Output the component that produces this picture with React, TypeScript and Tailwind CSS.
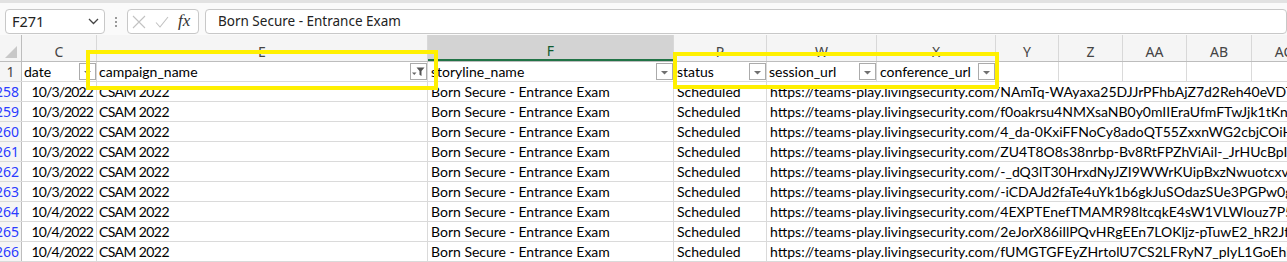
import React from "react";

type Col = { k: string; w: string; sel?: boolean };

const cols: Col[] = [
  { k: "C", w: "w-[75px]" },
  { k: "E", w: "w-[331px]" },
  { k: "F", w: "w-[246px]", sel: true },
  { k: "P", w: "w-[93px]" },
  { k: "W", w: "w-[110px]" },
  { k: "X", w: "w-[119px]" },
  { k: "Y", w: "w-[63px]" },
  { k: "Z", w: "w-[64px]" },
  { k: "AA", w: "w-[64px]" },
  { k: "AB", w: "w-[65px]" },
  { k: "AC", w: "w-[64px]" },
];

const rows = [
  { n: 258, d: "10/3/2022", u: "NAmTq-WAyaxa25DJJrPFhbAjZ7d2Reh40eVDTxq" },
  { n: 259, d: "10/3/2022", u: "f0oakrsu4NMXsaNB0y0mIIEraUfmFTwJjk1tKnQw" },
  { n: 260, d: "10/3/2022", u: "4_da-0KxiFFNoCy8adoQT55ZxxnWG2cbjCOiHtRe" },
  { n: 261, d: "10/3/2022", u: "ZU4T8O8s38nrbp-Bv8RtFPZhViAil-_JrHUcBpIpQ" },
  { n: 262, d: "10/3/2022", u: "-_dQ3lT30HrxdNyJZI9WWrKUipBxzNwuotcxvcQe" },
  { n: 263, d: "10/3/2022", u: "-iCDAJd2faTe4uYk1b6gkJuSOdazSUe3PGPw0gTq" },
  { n: 264, d: "10/4/2022", u: "4EXPTEnefTMAMR98ltcqkE4sW1VLWlouz7P50aXe" },
  { n: 265, d: "10/4/2022", u: "2eJorX86iIlPQvHRgEEn7LOKljz-pTuwE2_hR2JfQa" },
  { n: 266, d: "10/4/2022", u: "fUMGTGFEyZHrtolU7CS2LFRyN7_pIyL1GoEhDEqW" },
];

function FilterBtn({ active }: { active?: boolean }) {
  return (
    <span className="ml-auto w-[17px] h-[17px] shrink-0 border border-[#ababab] bg-white flex items-center justify-center">
      {active ? (
        <svg width="15" height="15" viewBox="0 0 15 15">
          <path d="M1 8.5h4.5L3.25 11z" fill="#666" />
          <path d="M5.5 3.5h8l-3 3.5v5l-2-1.2V7z" fill="#555" />
        </svg>
      ) : (
        <svg width="15" height="15" viewBox="0 0 15 15">
          <path d="M4 7h7l-3.5 3.5z" fill="#707070" />
        </svg>
      )}
    </span>
  );
}

export default function App() {
  const cellText = "font-['Lato',sans-serif] text-[14px] text-black leading-none";
  return (
    <div className="relative w-[1287px] h-[262px] overflow-hidden bg-white">
      {/* Formula bar */}
      <div className="h-[35px] bg-[#fafafa] border-t-[3px] border-[#e2e2e2] flex items-start pt-[6px] pl-[5px] font-['Noto_Sans',sans-serif]">
        <div className="w-[100px] h-[25px] bg-white border border-[#c8c8c8] rounded-[4px] flex items-center pl-[6px] pr-[5px] text-[14.5px] text-[#222]">
          <span>F271</span>
          <svg className="ml-auto" width="11" height="7" viewBox="0 0 11 7">
            <path d="M1 1l4.5 4.5L10 1" stroke="#444" strokeWidth="1.3" fill="none" />
          </svg>
        </div>
        <div className="w-[22px] h-[25px] flex flex-col items-center justify-center gap-[2px]">
          <span className="w-[2px] h-[2px] bg-[#9a9a9a]" />
          <span className="w-[2px] h-[2px] bg-[#9a9a9a]" />
          <span className="w-[2px] h-[2px] bg-[#9a9a9a]" />
        </div>
        <div className="w-[72px] h-[25px] bg-white border border-[#c8c8c8] rounded-[4px] flex items-center pl-[4px] gap-[9px]">
          <svg width="14" height="14" viewBox="0 0 14 14">
            <path d="M1 1l12 12M13 1L1 13" stroke="#c2c2c2" strokeWidth="1.1" fill="none" />
          </svg>
          <svg width="14" height="14" viewBox="0 0 14 14">
            <path d="M1 7.5l4 4.5L13 2" stroke="#c2c2c2" strokeWidth="1.1" fill="none" />
          </svg>
          <span className="font-['Liberation_Serif',serif] italic text-[17px] text-[#333] leading-none -mt-[2px]">fx</span>
        </div>
        <div className="ml-[6px] flex-1 h-[25px] bg-white border border-[#c8c8c8] rounded-[4px] flex items-center pl-[12px] text-[13.5px] text-[#222]">
          Born Secure - Entrance Exam
        </div>
      </div>

      {/* Column header row */}
      <div className="h-[27px] flex bg-[#f5f5f5] border-b border-[#bdbdbd] font-['Noto_Sans',sans-serif]">
        <div className="w-[22px] shrink-0 border-r border-[#bdbdbd] relative">
          <svg className="absolute right-[4px] bottom-[3px]" width="12" height="12" viewBox="0 0 12 12">
            <path d="M12 0V12H0z" fill="#c8c8c8" />
          </svg>
        </div>
        {cols.map((c) => (
          <div
            key={c.k}
            className={`${c.w} shrink-0 border-r border-[#d8d8d8] flex items-center justify-center pt-[6px] text-[14px] ${
              c.sel ? "bg-[#d3d3d3] text-[#0f5a2f] border-b-2 border-b-[#217346]" : "text-[#444]"
            }`}
          >
            {c.k}
          </div>
        ))}
      </div>

      {/* Row 1 */}
      <div className="h-[20px] flex border-b border-[#dadada]">
        <div className="w-[22px] shrink-0 bg-[#f5f5f5] border-r border-[#bdbdbd] flex items-center justify-center text-[14px] text-[#444] font-['Noto_Sans',sans-serif]">
          1
        </div>
        <div className={`w-[75px] shrink-0 border-r border-[#dadada] flex items-center pl-[2px] ${cellText}`}>
          <span>date</span>
          <FilterBtn />
        </div>
        <div className={`w-[331px] shrink-0 border-r border-[#dadada] flex items-center pl-[2px] ${cellText}`}>
          <span>campaign_name</span>
          <FilterBtn active />
        </div>
        <div className={`w-[246px] shrink-0 border-r border-[#dadada] flex items-center pl-[3px] ${cellText}`}>
          <span>storyline_name</span>
          <FilterBtn />
        </div>
        <div className={`w-[93px] shrink-0 border-r border-[#dadada] flex items-center pl-[3px] ${cellText}`}>
          <span>status</span>
          <FilterBtn />
        </div>
        <div className={`w-[110px] shrink-0 border-r border-[#dadada] flex items-center pl-[2px] ${cellText}`}>
          <span>session_url</span>
          <FilterBtn />
        </div>
        <div className={`w-[119px] shrink-0 border-r border-[#dadada] flex items-center pl-[3px] ${cellText}`}>
          <span>conference_url</span>
          <FilterBtn />
        </div>
        <div className="w-[63px] shrink-0 border-r border-[#dadada]" />
        <div className="w-[64px] shrink-0 border-r border-[#dadada]" />
        <div className="w-[64px] shrink-0 border-r border-[#dadada]" />
        <div className="w-[65px] shrink-0 border-r border-[#dadada]" />
        <div className="w-[64px] shrink-0 border-r border-[#dadada]" />
      </div>

      {/* Data rows */}
      {rows.map((r) => (
        <div key={r.n} className="h-[20px] flex border-b border-[#dadada]">
          <div className="w-[22px] shrink-0 bg-[#f5f5f5] border-r border-[#bdbdbd] flex items-center justify-end pr-[2px] overflow-hidden text-[14px] text-[#2a3bff] font-['Noto_Sans',sans-serif]">
            <span className="shrink-0">{r.n}</span>
          </div>
          <div className={`w-[75px] shrink-0 border-r border-[#dadada] flex items-center justify-end pr-[3px] tracking-[-0.9px] ${cellText}`}>
            {r.d}
          </div>
          <div className={`w-[331px] shrink-0 border-r border-[#dadada] flex items-center pl-[2px] tracking-[-0.6px] ${cellText}`}>
            CSAM 2022
          </div>
          <div className={`w-[246px] shrink-0 border-r border-[#dadada] flex items-center pl-[3px] ${cellText}`}>
            Born Secure - Entrance Exam
          </div>
          <div className={`w-[93px] shrink-0 border-r border-[#dadada] flex items-center pl-[3px] ${cellText}`}>
            Scheduled
          </div>
          <div className={`flex-1 min-w-0 overflow-hidden whitespace-nowrap flex items-center pl-[3px] ${cellText}`}>
            https://teams-play.livingsecurity.com/{r.u}
          </div>
        </div>
      ))}

      {/* Yellow highlight boxes */}
      <div className="absolute left-[86px] top-[50px] w-[352px] h-[40px] border-4 border-[#fff000] pointer-events-none" />
      <div className="absolute left-[673px] top-[52px] w-[326px] h-[37px] border-4 border-[#fff000] pointer-events-none" />
    </div>
  );
}
